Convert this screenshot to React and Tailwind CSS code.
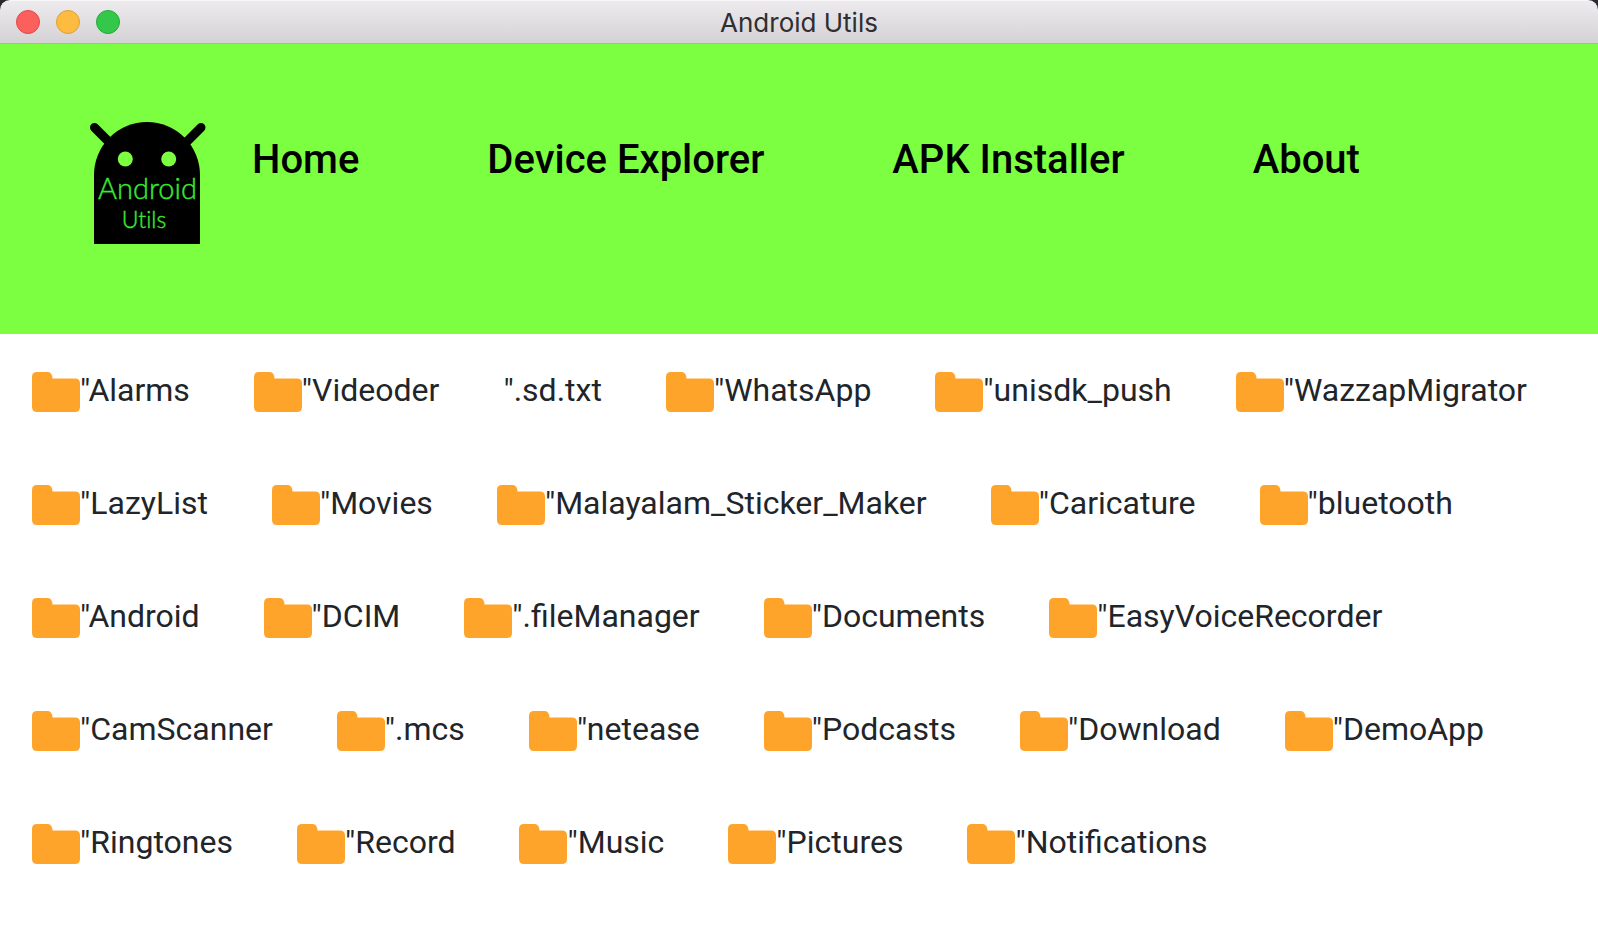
const navItems = ["Home", "Device Explorer", "APK Installer", "About"];

const entries = [
  "Alarms", "Videoder", ".sd.txt", "WhatsApp", "unisdk_push", "WazzapMigrator",
  "LazyList", "Movies", "Malayalam_Sticker_Maker", "Caricature", "bluetooth",
  "Android", "DCIM", ".fileManager", "Documents", "EasyVoiceRecorder",
  "CamScanner", ".mcs", "netease", "Podcasts", "Download", "DemoApp",
  "Ringtones", "Record", "Music", "Pictures", "Notifications",
];

function TitleBar() {
  return (
    <div className="bg-[#2a2a2e]">
      <div className="grid h-11 grid-cols-[1fr_auto_1fr] items-center rounded-t-[10px] border-t border-b border-t-[#f8f6f8] border-b-[#b3b0b3] bg-linear-to-b from-[#edebee] to-[#d4d2d5] px-4">
        <div className="flex gap-4">
          <button aria-label="Close" className="size-6 rounded-full border border-[#e0484a] bg-[#fc605c]" />
          <button aria-label="Minimize" className="size-6 rounded-full border border-[#dea032] bg-[#fdbc40]" />
          <button aria-label="Zoom" className="size-6 rounded-full border border-[#24a936] bg-[#34c84a]" />
        </div>
        <h1 className="pt-0.5 font-['Inter',sans-serif] text-[26px] leading-8 text-[#2f2e30]">Android Utils</h1>
      </div>
    </div>
  );
}

function Logo() {
  return (
    <svg viewBox="86 118 124 128" className="h-32 w-31 shrink-0" role="img" aria-label="Android Utils">
      <path d="M94 175a53 53 0 0 1 106 0v69H94z" fill="#000" />
      <path d="M94.500 127.500 112 145M201 127.500 183.500 145" stroke="#000" strokeWidth="9" strokeLinecap="round" />
      <circle cx="125.300" cy="159" r="7.500" fill="#7dff41" />
      <circle cx="168.700" cy="159" r="7.500" fill="#7dff41" />
      <g
        className="[font-variant-ligatures:none]"
        fill="#3aea31"
        stroke="#3aea31"
        strokeWidth="0.400"
        textAnchor="middle"
        fontFamily="Lato, sans-serif"
        fontWeight="300"
      >
        <text x="147.500" y="199" fontSize="29">Android</text>
        <text x="144" y="228" fontSize="23">Utils</text>
      </g>
    </svg>
  );
}

function FolderIcon() {
  return (
    <svg viewBox="0 0 48 40" className="h-10 w-12 shrink-0" aria-hidden="true">
      <path d="M5 0h11q4 0 4.500 6.500H43q5 0 5 5V35q0 5-5 5H5q-5 0-5-5V5q0-5 5-5z" fill="#ffa42b" />
    </svg>
  );
}

export default function App() {
  return (
    <div className="min-h-screen bg-white font-['Roboto',sans-serif]">
      <TitleBar />
      <header className="flex items-start gap-[42px] bg-[#7dff41] px-[86px] pt-[74px] pb-[88px]">
        <Logo />
        <nav className="flex gap-32 pt-[18px] text-[40px] leading-12 font-medium text-black">
          {navItems.map((item) => (
            <a key={item} href="#" className="whitespace-nowrap">{item}</a>
          ))}
        </nav>
      </header>
      <main className="px-8 pt-8 pb-8">
        <ul className="flex flex-wrap gap-x-16 gap-y-[65px] text-[32px] leading-12 text-[#212529]">
          {entries.map((name) => (
            <li key={name} className="flex items-start">
              {name !== ".sd.txt" && (
                <span className="h-12 pt-1.5">
                  <FolderIcon />
                </span>
              )}
              <span>"{name}</span>
            </li>
          ))}
        </ul>
      </main>
    </div>
  );
}
